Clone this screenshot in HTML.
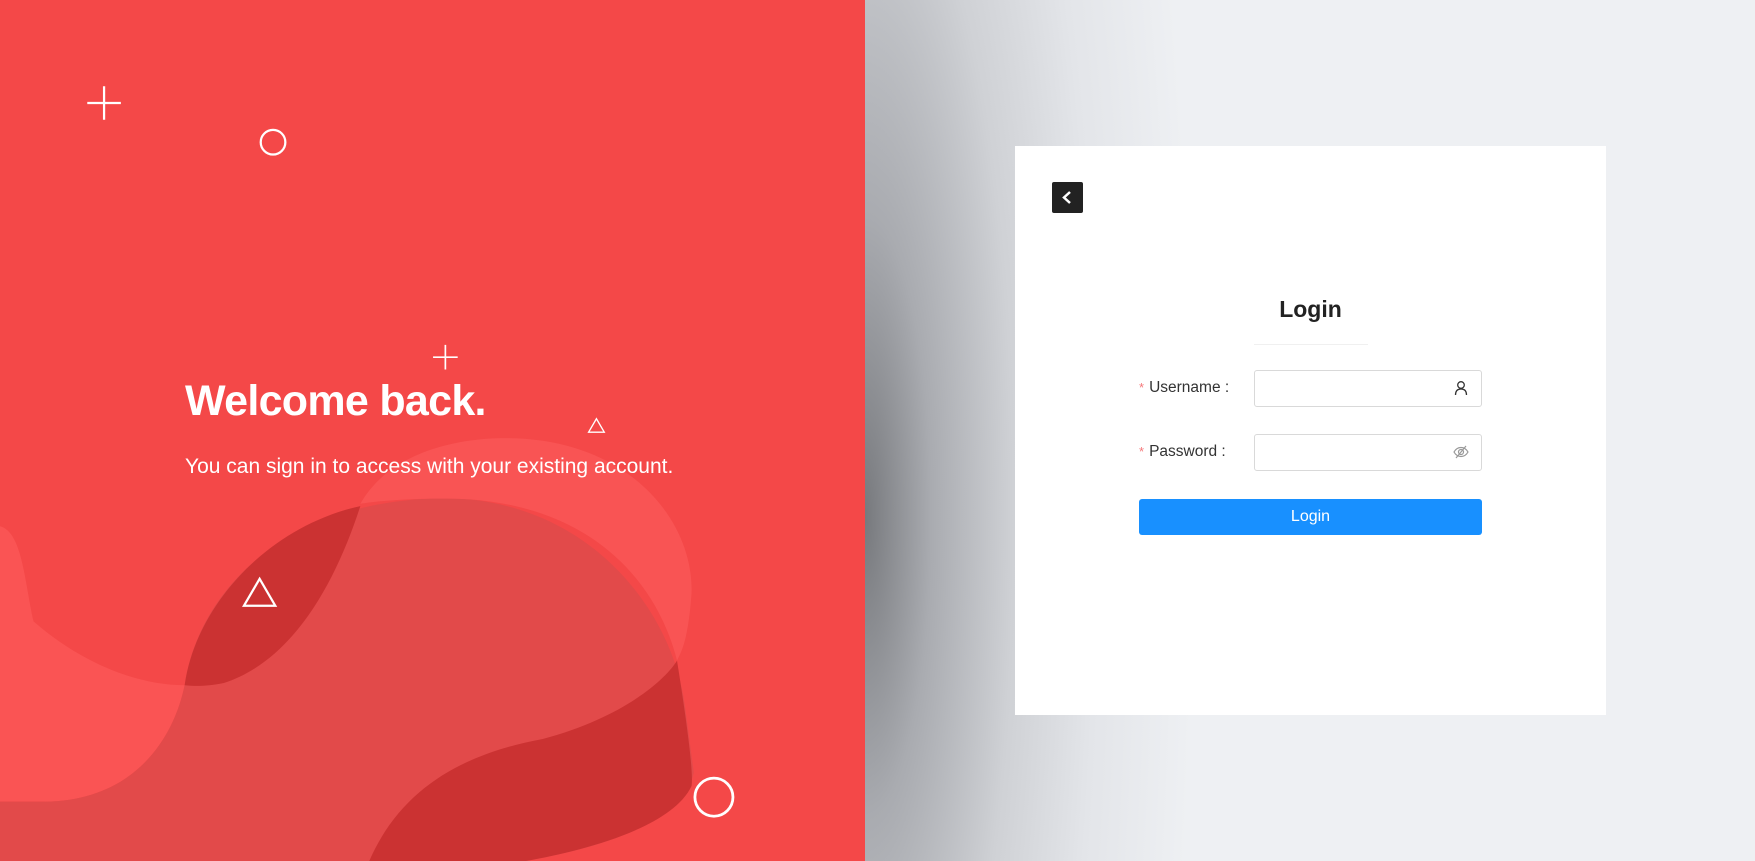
<!DOCTYPE html>
<html><head><meta charset="utf-8"><style>
*{margin:0;padding:0;box-sizing:border-box}
html,body{width:1755px;height:861px;overflow:hidden;font-family:"Liberation Sans",sans-serif}
body{background:#eef0f3;position:relative}
.shade{position:absolute;left:865px;top:0;width:450px;height:861px;background:radial-gradient(ellipse 330px 1500px at 0 60%,#77797d 0%,#a9abb0 20%,#cfd1d5 45%,#e3e5e9 70%,rgba(238,240,243,0) 100%)}
.left{position:absolute;left:0;top:0;width:865px;height:861px;background:#f44848;overflow:hidden}
.left svg{position:absolute;left:0;top:0}
.h1{position:absolute;left:185px;top:377px;color:#fff;font-size:43px;font-weight:bold;letter-spacing:-0.7px}
.sub{position:absolute;left:185px;top:455px;color:#fff;font-size:21px;font-weight:300}
.card{position:absolute;left:1015px;top:146px;width:591px;height:569px;background:#fff}
.back{position:absolute;left:37px;top:36px;width:31px;height:31px;background:#222;border-radius:2px}
.title{position:absolute;left:0;width:100%;top:150px;text-align:center;font-size:23px;font-weight:bold;color:#222}
.div{position:absolute;left:239px;top:198px;width:114px;height:1px;background:#f0f0f0}
.lbl{position:absolute;left:124px;font-size:15.5px;color:#333}
.lbl b{color:#f5787a;font-weight:normal;margin-right:5px;font-size:13px}
.inp{position:absolute;left:239px;width:228px;height:37px;border:1px solid #d9d9d9;border-radius:3px}
.inp svg{position:absolute;right:12px;top:9px}
.btn{position:absolute;left:124px;top:353px;width:343px;height:36px;background:#1890ff;border-radius:3px;color:#fff;text-align:center;line-height:36px;font-size:16px}
</style></head><body>
<div class="shade"></div>
<div class="left">
<svg width="865" height="861" viewBox="0 0 773 769" preserveAspectRatio="none">
<path d="M0 470 C20 475 22 520 30 555 C70 590 120 612 165 612 C155 660 120 715 40 716 L0 716 Z" fill="#fa5454"/>
<path d="M165 612 C175 540 240 450 390 445 C520 442 600 540 612 630 L620 690 C610 740 520 760 470 769 L0 769 L0 716 L40 716 C120 715 155 660 165 612 Z" fill="#e24a4a"/>
<path d="M322 450 C350 400 420 388 470 392 C570 400 620 470 618 530 C615 570 610 580 605 590 C590 530 540 455 420 446 C380 444 340 447 322 450 Z" fill="#f95454"/>
<path d="M165 612 C175 540 240 470 322 452 C300 520 262 590 200 610 C185 613 175 613 165 612 Z" fill="#cb3232"/>
<path d="M330 769 C360 700 420 672 485 660 C560 640 596 605 605 590 C613 640 620 690 618 702 C600 740 520 760 470 769 Z" fill="#cb3232"/>
<g stroke="#fff" fill="none" stroke-width="2">
<path d="M78 92 H108 M93 77 V107"/>
<circle cx="244" cy="127" r="11"/>
<path d="M387 319 H409 M398 308 V330" stroke-width="1.5"/>
<path d="M533 374 L540 386 H526 Z" stroke-width="1.2"/>
<path d="M232 517 L246 541 H218 Z"/>
<circle cx="638" cy="712" r="17" stroke-width="2.5"/>
</g>
</svg>
<div class="h1">Welcome back.</div>
<div class="sub">You can sign in to access with your existing account.</div>
</div>
<div class="card">
<div class="back"><svg width="31" height="31"><path d="M18 10 L12 15.5 L18 21" stroke="#fff" stroke-width="2.5" fill="none"/></svg></div>
<div class="title">Login</div>
<div class="div"></div>
<div class="lbl" style="top:233px"><b>*</b>Username :</div>
<div class="inp" style="top:224px"><svg width="16" height="16" viewBox="0 0 16 16" fill="none" stroke="#333" stroke-width="1.3"><circle cx="8" cy="5" r="3.3"/><path d="M2.5 15 C2.5 10.5 5 9 8 9 C11 9 13.5 10.5 13.5 15"/></svg></div>
<div class="lbl" style="top:297px"><b>*</b>Password :</div>
<div class="inp" style="top:288px"><svg width="16" height="16" viewBox="0 0 16 16" fill="none" stroke="#999" stroke-width="1.2"><path d="M1 8 C3 4.5 5.5 3.5 8 3.5 C10.5 3.5 13 4.5 15 8 C13 11.5 10.5 12.5 8 12.5 C5.5 12.5 3 11.5 1 8 Z"/><circle cx="8" cy="8" r="2.5"/><path d="M3 14 L13 2"/></svg></div>
<div class="btn">Login</div>
</div>
</body></html>
